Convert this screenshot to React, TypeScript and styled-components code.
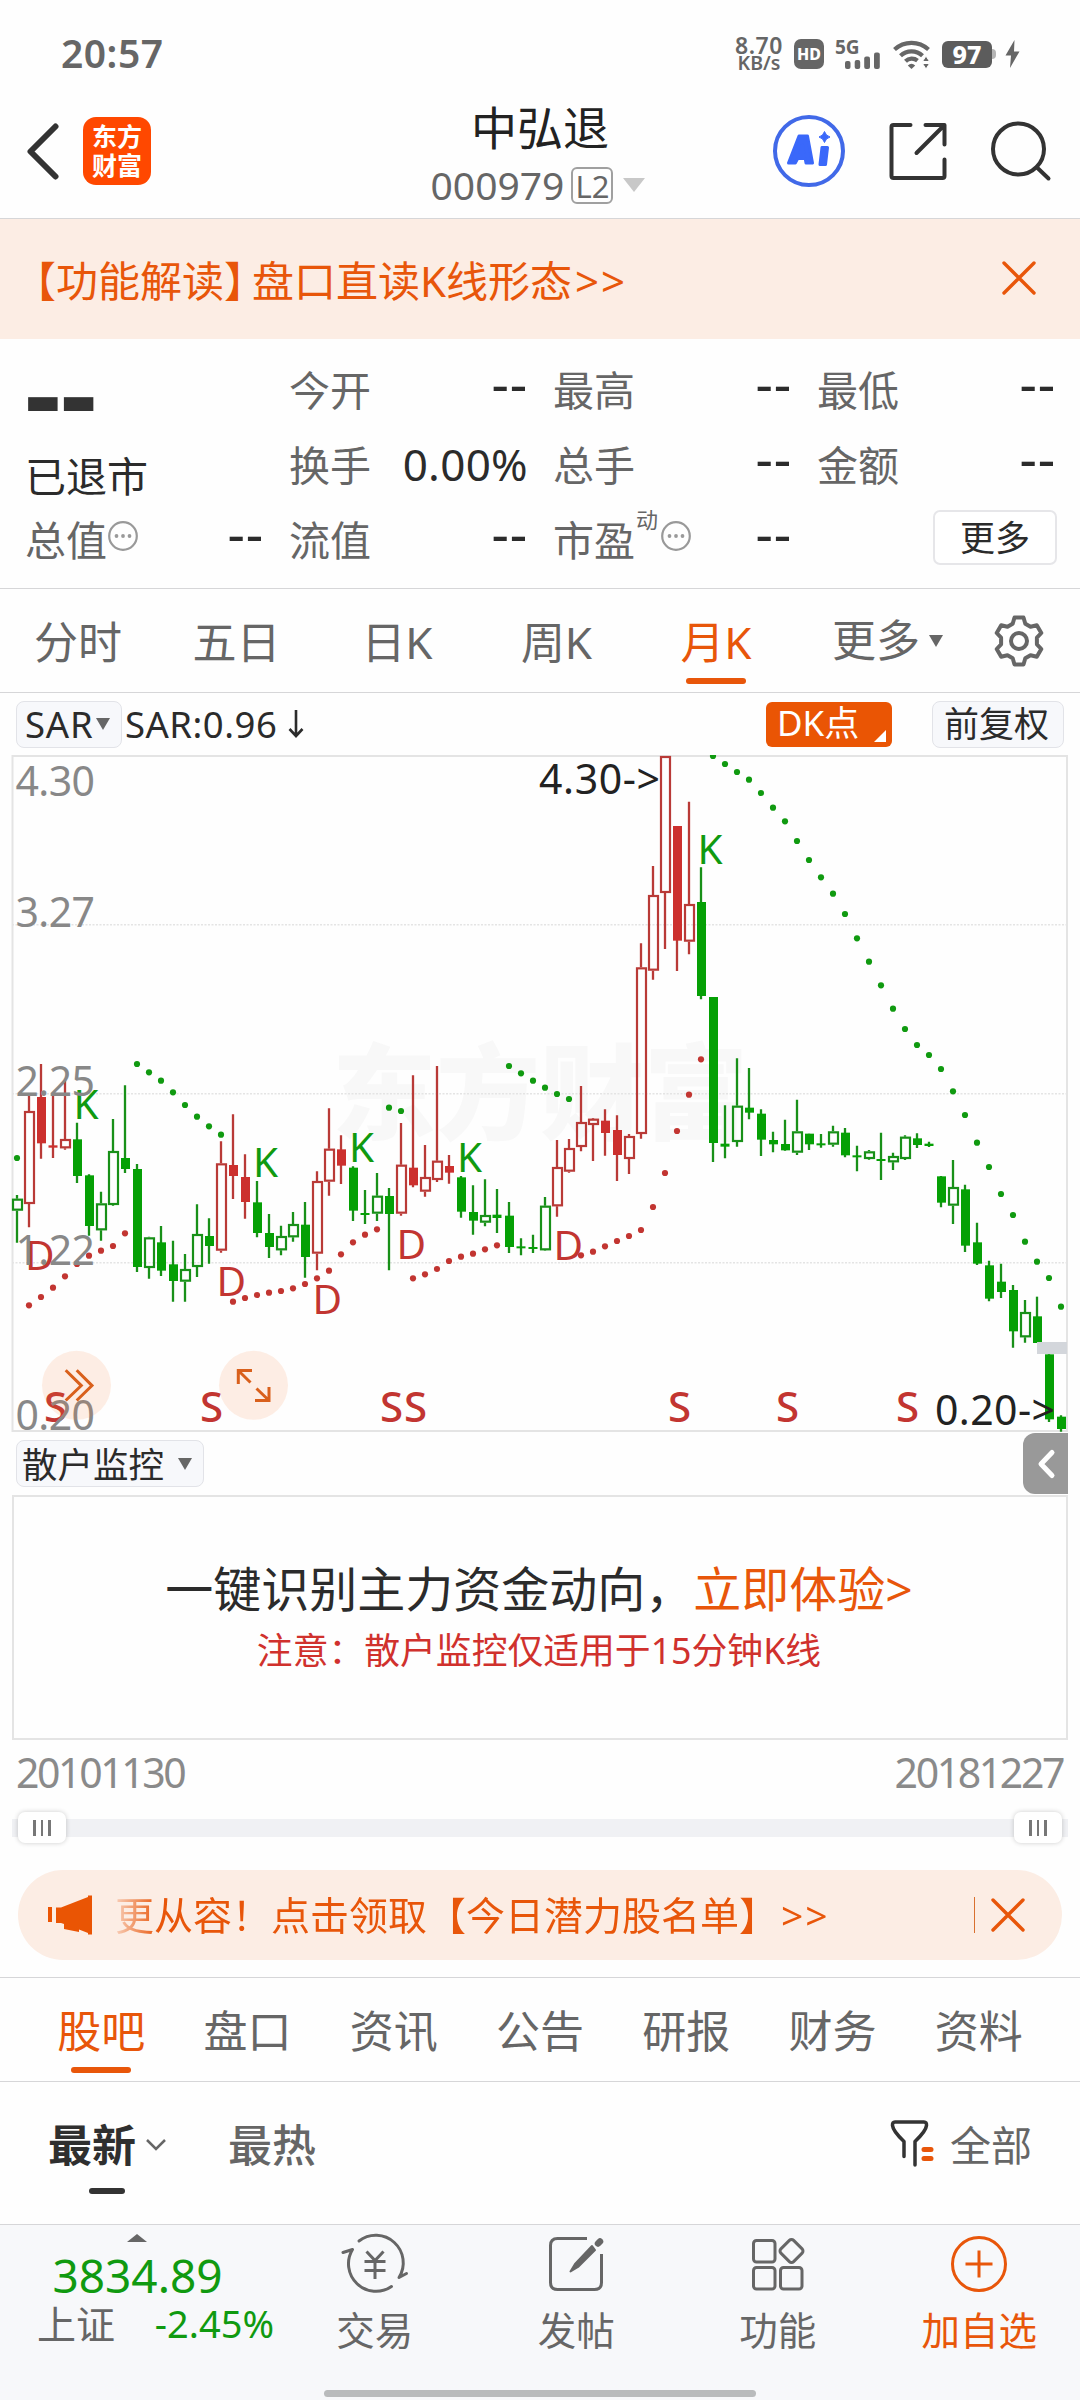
import React from "react";
import styled, { createGlobalStyle, css } from "styled-components";

const accent = "#e8560a";
const green = "#109a10";
const solidGreen = "#05a005";
const red = "#c23531";
const ink = "#2b2b2b";
const grey = "#666";
const line = "#d6d6d8";

const GlobalStyle = createGlobalStyle`
  * { box-sizing: border-box; }
  body {
    margin: 0;
    background: #fefefe;
    font-family: "Noto Sans", "Noto Sans CJK SC", sans-serif;
    color: ${ink};
  }
  svg { display: block; flex: none; }
`;

const Screen = styled.div`
  width: 1080px;
  height: 2400px;
  display: flex;
  flex-direction: column;
  overflow: hidden;
  background: #fefefe;
  white-space: nowrap;
`;

/* ---------- status bar ---------- */
const StatusBar = styled.div`
  height: 96px;
  padding: 12px 60px 0 61px;
  display: flex;
  align-items: center;
  justify-content: space-between;
  color: ${grey};
`;
const Clock = styled.span`
  margin-top: -3px;
  font-size: 39px;
  font-weight: 600;
  letter-spacing: 0.5px;
`;
const StatusIcons = styled.div`
  display: flex;
  align-items: center;
`;
const NetSpeed = styled.div`
  display: flex;
  flex-direction: column;
  align-items: center;
  width: 52px;
  margin-right: 9px;
  font-weight: 600;
  line-height: 18px;
  font-size: 19.5px;
`;
const SpeedValue = styled.span`
  font-size: 23px;
  letter-spacing: 0.5px;
`;
const HdBadge = styled.span`
  width: 30px;
  height: 30px;
  margin-right: 12px;
  border-radius: 7px;
  background: ${grey};
  color: #fff;
  font-size: 16px;
  font-weight: 800;
  line-height: 30px;
  text-align: center;
`;
const Battery = styled.span`
  width: 50px;
  height: 27px;
  margin-left: 11px;
  border-radius: 6px;
  background: #5c5c5c;
  color: #fff;
  font-size: 25px;
  font-weight: 800;
  line-height: 27px;
  text-align: center;
`;
const BatteryTip = styled.span`
  width: 4px;
  height: 10px;
  margin-right: 9px;
  border-radius: 0 4px 4px 0;
  background: #b5b5b5;
`;

/* ---------- header ---------- */
const Header = styled.header`
  height: 123px;
  display: grid;
  grid-template-columns: 1fr auto 1fr;
  border-bottom: 1px solid ${line};
`;
const HeaderSide = styled.div<{ $end?: boolean }>`
  height: 68px;
  margin-top: 21px;
  padding: ${(p) => (p.$end ? "0 28px 0 0" : "0 0 0 26px")};
  display: flex;
  align-items: center;
  gap: ${(p) => (p.$end ? 42 : 23)}px;
  justify-content: ${(p) => (p.$end ? "flex-end" : "flex-start")};
`;
const BrandLogo = styled.div`
  width: 68px;
  height: 68px;
  padding: 5px 0;
  display: flex;
  flex-direction: column;
  align-items: center;
  border-radius: 13px;
  background: #ff4800;
  color: #fff;
  font-size: 25px;
  font-weight: 700;
  line-height: 29px;
`;
const TitleBlock = styled.div`
  padding-top: 6px;
  display: flex;
  flex-direction: column;
  align-items: center;
`;
const Title = styled.h1`
  margin: 0;
  font-size: 46px;
  font-weight: 400;
  line-height: 50px;
  color: #222;
`;
const CodeRow = styled.div`
  margin: 13px 0 0 -4px;
  height: 40px;
  display: flex;
  align-items: center;
  font-size: 39px;
  line-height: 40px;
  color: ${grey};
`;
const LevelTag = styled.span`
  width: 42px;
  height: 37px;
  margin: 0 10px 0 7px;
  border: 2px solid #a0a0a0;
  border-radius: 6px;
  font-size: 31px;
  line-height: 34px;
  text-align: center;
`;
const Triangle = styled.i<{ $w: number; $h: number; $c?: string; $up?: boolean }>`
  flex: none;
  width: 0;
  height: 0;
  border: solid transparent;
  border-width: 0 ${(p) => p.$w / 2}px;
  ${(p) =>
    p.$up
      ? css`border-bottom: ${p.$h}px solid ${p.$c || grey};`
      : css`border-top: ${p.$h}px solid ${p.$c || grey};`}
`;

/* ---------- top notice ---------- */
const Notice = styled.div`
  height: 120px;
  padding: 0 44px 2px 14px;
  display: flex;
  align-items: center;
  justify-content: space-between;
  background: #fcede4;
  color: ${accent};
  font-size: 42px;
`;
const CloseBracket = styled.span`
  margin-right: -14px;
`;
const Arrows = styled.span`
  margin-left: 3px;
  letter-spacing: 2px;
`;

/* ---------- quote panel ---------- */
const Quote = styled.section`
  height: 250px;
  padding: 11px 26px 0 25px;
  display: grid;
  grid-template-columns: repeat(4, 237px);
  column-gap: 27px;
  border-bottom: 1px solid ${line};
  font-size: 41px;
`;
const QuoteColumn = styled.div`
  display: flex;
  flex-direction: column;
`;
const QuoteRow = styled.div`
  height: 75px;
  display: flex;
  align-items: center;
  color: ${grey};
`;
const QuoteValue = styled.span`
  margin: 2px -2px 0 auto;
  color: ${ink};
  font-size: 44px;
  letter-spacing: 0.3px;
`;
const Dashes = styled.span`
  margin: -9px -2px 0 auto;
  color: ${ink};
  font-size: 54px;
  line-height: 60px;
  letter-spacing: 0.8px;
`;
const LastPrice = styled.div`
  height: 84px;
  color: #333;
  font-size: 112px;
  font-weight: 700;
  line-height: 82px;
`;
const ListingState = styled.div`
  height: 66px;
  color: ${ink};
  line-height: 84px;
`;
const Superscript = styled.sup`
  margin: -37px 2px 0 1px;
  font-size: 22px;
  line-height: 24px;
`;
const InfoDot = styled.svg`
  width: 32px;
  height: 32px;
  margin-top: -3px;
`;
const MoreButton = styled.button`
  width: 124px;
  height: 55px;
  margin: 0 -3px 0 auto;
  padding: 0;
  border: 2px solid #e6e6e9;
  border-radius: 7px;
  background: #fff;
  color: ${ink};
  font: 35px/48px "Noto Sans", "Noto Sans CJK SC", sans-serif;
`;

/* ---------- tabs ---------- */
const PeriodTabs = styled.nav`
  height: 104px;
  display: flex;
  border-bottom: 1px solid ${line};
`;
const Tab = styled.div<{ $w: number; $active?: boolean }>`
  width: ${(p) => p.$w}px;
  display: flex;
  flex-direction: column;
  align-items: center;
  color: ${(p) => (p.$active ? accent : grey)};
  font-size: 44px;
  line-height: 107px;
  &::after {
    content: "";
    display: ${(p) => (p.$active ? "block" : "none")};
    width: 60px;
    height: 6px;
    margin-top: -18px;
    border-radius: 3px;
    background: ${accent};
  }
`;
const TabMore = styled.div`
  width: 164px;
  padding-left: 36px;
  display: flex;
  align-items: center;
  gap: 9px;
  color: ${grey};
  font-size: 44px;
  line-height: 107px;
`;
const TabIcon = styled.div`
  width: 118px;
  display: flex;
  align-items: center;
  justify-content: center;
`;
const SectionTabs = styled.nav`
  height: 105px;
  padding: 0 28px;
  display: flex;
  border-top: 1px solid ${line};
  border-bottom: 1px solid ${line};
`;

/* ---------- chart ---------- */
const ChartTools = styled.div`
  height: 62px;
  padding: 0 16px;
  display: flex;
  align-items: center;
  font-size: 36.5px;
`;
const Chip = styled.div<{ $w: number; $pad: number; $gap?: number }>`
  width: ${(p) => p.$w}px;
  height: 47px;
  padding-left: ${(p) => p.$pad}px;
  display: flex;
  align-items: center;
  gap: ${(p) => p.$gap || 0}px;
  border: 1.5px solid #e2e3e8;
  border-radius: 8px;
  background: #f7f8fb;
  color: ${ink};
  line-height: 44px;
`;
const AdjustLabel = styled.span`
  font-size: 35px;
`;
const SarValue = styled.span`
  margin-left: 3px;
  letter-spacing: 0.5px;
`;
const SarLabel = styled.span`
  letter-spacing: 0.8px;
`;
const DkButton = styled.div`
  width: 126px;
  height: 45px;
  margin-left: auto;
  margin-right: 40px;
  padding: 0 6px 5px 11px;
  display: flex;
  align-items: flex-end;
  justify-content: space-between;
  border-radius: 6px;
  background: #ea5504;
  color: #fff;
  font-size: 35px;
  line-height: 38px;
`;
const SubBar = styled.div`
  height: 63px;
  padding: 0 12px 0 16px;
  display: flex;
  align-items: center;
  justify-content: space-between;
  font-size: 35.5px;
`;
const CollapseButton = styled.div`
  width: 45px;
  height: 61px;
  display: flex;
  align-items: center;
  justify-content: center;
  border-radius: 12px 0 0 12px;
  background: #999;
`;
const Promo = styled.div`
  height: 245px;
  margin: 0 12px;
  padding: 62px 2px 0 0;
  display: flex;
  flex-direction: column;
  align-items: center;
  border: 2px solid #e4e4e4;
`;
const PromoTitle = styled.div`
  font-size: 48px;
  line-height: 60px;
`;
const PromoLink = styled.span`
  color: ${accent};
`;
const PromoNote = styled.div`
  color: #d0312d;
  font-size: 35.8px;
  line-height: 62px;
`;
const DateRow = styled.div`
  height: 65px;
  padding: 0 17px 2px 16px;
  display: flex;
  align-items: center;
  justify-content: space-between;
  color: #8a8a8a;
  font-size: 41px;
  letter-spacing: -2.4px;
`;
const SliderBox = styled.div`
  height: 64px;
  margin: 0 12px;
  padding: 0 6px;
  display: flex;
  align-items: center;
  justify-content: space-between;
  background: linear-gradient(#f0f1f4, #f0f1f4) center 14px / 100% 18px no-repeat;
`;
const Handle = styled.div`
  width: 48px;
  height: 31px;
  margin-top: -19px;
  display: flex;
  align-items: center;
  justify-content: center;
  gap: 5px;
  border-radius: 7px;
  background: #fff;
  box-shadow: 0 0 5px rgba(0, 0, 0, 0.2);
`;
const Grip = styled.i`
  width: 2.5px;
  height: 16px;
  background: #777;
`;

/* ---------- promo pill ---------- */
const Pill = styled.div`
  height: 90px;
  margin: 1px 18px 17px;
  padding: 0 37px 0 29px;
  display: flex;
  align-items: center;
  border-radius: 45px;
  background: #fcede4;
  color: ${accent};
  font-size: 39px;
`;
const PillText = styled.div`
  flex: 1;
  margin-left: 22px;
  line-height: 88px;
  mask-image: linear-gradient(90deg, rgba(0, 0, 0, 0.2), #000 44px);
`;
const PillDivider = styled.i`
  width: 1.5px;
  height: 36px;
  margin-right: 16px;
  background: #d9702f;
`;

/* ---------- post filter ---------- */
const FilterRow = styled.div`
  height: 142px;
  padding: 0 48px;
  display: flex;
`;
const SortOption = styled.div<{ $active?: boolean }>`
  margin-right: 62px;
  display: flex;
  flex-direction: column;
  align-items: center;
  color: ${(p) => (p.$active ? "#2f2f2f" : grey)};
  font-size: 44px;
  font-weight: ${(p) => (p.$active ? 700 : 500)};
  &::after {
    content: "";
    display: ${(p) => (p.$active ? "block" : "none")};
    width: 36px;
    height: 6px;
    margin-top: -20px;
    border-radius: 3px;
    background: #333;
  }
`;
const SortLabel = styled.div`
  display: flex;
  align-items: center;
  gap: 10px;
  line-height: 126px;
`;
const FilterButton = styled.div`
  margin-left: auto;
  height: 122px;
  display: flex;
  align-items: center;
  gap: 14px;
  color: ${grey};
  font-size: 41px;
`;

/* ---------- bottom bar ---------- */
const BottomBar = styled.footer`
  flex: 1;
  display: flex;
  flex-direction: column;
  border-top: 1px solid ${line};
  background: #f7f8fa;
`;
const BottomItems = styled.div`
  height: 165px;
  display: flex;
`;
const IndexQuote = styled.div`
  width: 274px;
  padding-top: 9px;
  display: flex;
  flex-direction: column;
  align-items: center;
`;
const IndexPrice = styled.div`
  margin: 3px 0 0 1px;
  color: ${green};
  font-size: 46px;
  line-height: 60px;
`;
const IndexRow = styled.div`
  width: 100%;
  padding-left: 37px;
  display: flex;
  justify-content: space-between;
  color: ${grey};
  font-size: 39px;
  line-height: 37px;
`;
const IndexChange = styled.span`
  color: ${green};
  font-size: 38px;
`;
const NavItem = styled.div<{ $accent?: boolean }>`
  width: 201.5px;
  padding-top: 8px;
  display: flex;
  flex-direction: column;
  align-items: center;
  color: ${(p) => (p.$accent ? accent : grey)};
  font-size: 38.5px;
  line-height: 71px;
`;
const HomeIndicator = styled.div`
  width: 432px;
  height: 7px;
  margin: 0 auto;
  border-radius: 4px;
  background: #b9bbbc;
`;

/* ---------- icons ---------- */
const CloseIcon = () => (
  <svg width="34" height="34" viewBox="0 0 34 34" stroke={accent} strokeWidth="3.4" strokeLinecap="round">
    <path d="M2 2 32 32M32 2 2 32" />
  </svg>
);

const InfoIcon = () => (
  <InfoDot viewBox="0 0 32 32">
    <circle cx="16" cy="16" r="13.8" fill="none" stroke="#999" strokeWidth="2.2" />
    {[9.5, 16, 22.5].map((x) => (
      <circle key={x} cx={x} cy="16" r="1.9" fill="#999" />
    ))}
  </InfoDot>
);

const SignalIcon = () => (
  <svg width="46" height="32" viewBox="0 0 46 32" fill={grey} overflow="visible">
    <text x="-1" y="15.5" fontSize="19" fontWeight="700" fontFamily="Noto Sans">5G</text>
    <rect x="9" y="23" width="5.5" height="8" rx="2" />
    <rect x="18.7" y="22" width="5.5" height="9" rx="2" />
    <rect x="28.2" y="18.5" width="5.8" height="12.5" rx="2" />
    <rect x="38" y="14.5" width="5.8" height="16.5" rx="2" />
  </svg>
);

const WifiIcon = () => (
  <svg width="38" height="32" viewBox="0 0 38 32" fill="none" stroke={grey} strokeWidth="4.2">
    <path d="M1.5 11.5a25 25 0 0 1 34 0" />
    <path d="M7.5 17.8a16 16 0 0 1 22 0" />
    <path d="M12.5 23.2a9 9 0 0 1 12 -.6" />
    <path d="M14.8 27.5q3.7-3.6 7.4 0L18.5 31z" fill={grey} stroke="none" />
    <path d="M29.5 23.5 33 18l3.5 5.5zM29.5 25.5 33 31l3.5-5.5z" fill={grey} stroke="#fefefe" strokeWidth="1" />
  </svg>
);

const StatusGap = styled.i`
  width: 11px;
`;

const BoltIcon = () => (
  <svg width="15" height="28" viewBox="0 0 15 28" fill={grey}>
    <path d="M9.5 0 .5 15.5H6L5 28 14.5 11.5H9z" />
  </svg>
);

const BackIcon = () => (
  <svg width="34" height="58" viewBox="0 0 34 58" fill="none" stroke="#333" strokeWidth="6" strokeLinecap="round" strokeLinejoin="round">
    <path d="M29.5 4.500 4.500 29.500 29.500 54.500" />
  </svg>
);

const AiIcon = () => (
  <svg width="74" height="74" viewBox="0 0 74 74">
    <circle cx="37" cy="37" r="34" fill="#fff" stroke="#4169e8" strokeWidth="4" />
    <path
      fillRule="evenodd"
      fill="#3a68fa"
      stroke="#3a68fa"
      strokeWidth="3"
      strokeLinejoin="round"
      d="M27 22h8.500l5 27h-6.500l-.8-4.500h-7.500L23.300 49H16.500zM30.500 31l-2.700 7.500h4z"
    />
    <path d="M50 33.500h5.500L53.500 50.500H48z" fill="#3a68fa" stroke="#3a68fa" strokeWidth="3" strokeLinejoin="round" />
    <path d="M52.500 17.500q1.200 4.300 5.500 5.500-4.300 1.200-5.500 5.500-1.200-4.300-5.500-5.500 4.300-1.200 5.500-5.500z" fill="#3a68fa" stroke="#3a68fa" />
  </svg>
);

const ShareIcon = () => (
  <svg width="60" height="60" viewBox="0 0 60 60" fill="none" stroke="#333" strokeWidth="4" strokeLinecap="round" strokeLinejoin="round">
    <path d="M22.500 4H5.500q-2 0-2 2v49q0 2 2 2h49q2 0 2-2V38.500" />
    <path d="M37.500 4H56.500V23.500M55 5.500 28.500 32" />
  </svg>
);

const SearchIcon = () => (
  <svg width="62" height="62" viewBox="0 0 62 62" fill="none" stroke="#333" strokeWidth="4" strokeLinecap="round">
    <circle cx="28.500" cy="29" r="25.500" />
    <path d="M47 47.500 58.500 58.500" />
  </svg>
);

const GearIcon = () => (
  <svg width="54" height="54" viewBox="0 0 54 54" fill="none" stroke={grey} strokeWidth="4" strokeLinejoin="round">
    <path d="M22.500 3.500h9l1.800 6.200 5.200 3 6.300-1.500 4.500 7.800-4.400 4.700v6.600l4.400 4.700-4.500 7.800-6.300-1.500-5.200 3-1.800 6.200h-9l-1.800-6.200-5.200-3-6.300 1.500-4.500-7.800 4.400-4.700v-6.600L4.700 19l4.500-7.800 6.300 1.500 5.200-3z" />
    <circle cx="27" cy="27" r="8" />
  </svg>
);

const HornIcon = () => (
  <svg width="46" height="42" viewBox="0 0 46 42" fill="#ea5504">
    <rect x="1" y="13" width="4" height="15" />
    <path d="M9 13.500h5L41 3V1.500h4v39h-4V39L32 35.500V38l-15-3v-5l-3-1H9z" />
  </svg>
);

const FunnelIcon = () => (
  <svg width="46" height="48" viewBox="0 0 46 48" fill="none" strokeWidth="3.500" strokeLinecap="round" strokeLinejoin="round">
    <path d="M14 37.500V22.500Q3 12 2.500 6.500q-.3-3.500 2.500-3.500h29q2.800 0 2.500 3.500Q36 12 25 22.500V46" stroke="#333" />
    <path d="M34 30.500h7M34 39.500h7" stroke={accent} strokeWidth="5" />
  </svg>
);

const TradeIcon = () => (
  <svg width="68" height="62" viewBox="0 0 68 62" fill="none" stroke={grey} strokeWidth="3" strokeLinecap="round">
    <path d="M18 8A27.500 27.500 0 0 1 58 44.500L65.500 40.500" strokeLinejoin="round" />
    <path d="M50.500 53.500A27.500 27.500 0 0 1 11.500 16.500L2 19.500" strokeLinejoin="round" />
    <path d="M25.500 18.500 34 27.500 42.500 18.500M34 27.500V46M23.500 28.500h21M23.500 37.500h21" strokeLinecap="butt" />
  </svg>
);

const PostIcon = () => (
  <svg width="62" height="62" viewBox="0 0 62 62" fill="none" stroke={grey} strokeWidth="3">
    <path d="M42 5.500H12.500q-7 0-7 7v37q0 7 7 7h37q7 0 7-7V21" />
    <path d="M47 13 30 31 25.500 38.500 33 34 50 17z" fill={grey} strokeWidth="2" strokeLinejoin="round" />
    <path d="M53 10.500 55 8.500" strokeWidth="6.500" strokeLinecap="round" />
  </svg>
);

const GridIcon = () => (
  <svg width="62" height="62" viewBox="0 0 62 62" fill="none" stroke={grey} strokeWidth="3">
    <rect x="6.500" y="7.500" width="21.500" height="21.500" rx="3" />
    <rect x="6.500" y="34.500" width="21.500" height="21.500" rx="3" />
    <rect x="33.500" y="34.500" width="21.500" height="21.500" rx="3" />
    <rect x="35.500" y="9" width="18" height="18" rx="3" transform="rotate(45 44.500 18)" />
  </svg>
);

const AddIcon = () => (
  <svg width="62" height="62" viewBox="0 0 62 62" fill="none" stroke={accent} strokeWidth="3">
    <circle cx="31" cy="31" r="26.500" />
    <path d="M17.500 31h27M31 17.500v27" />
  </svg>
);

/* ---------- candle data: kind, high, top, bottom, low ---------- */
type Candle = [string, number, number, number, number];
type Block = { base: number; rows: Candle[] };

/* Values are thirds of a pixel below each block's base line.
   G / R: filled body, g / r: hollow body, x: green cross, y: red cross. */
const blocks: Block[] = [
  {
    base: 1040,
    rows: [
      ["g", 465, 476, 512, 608], ["r", 165, 213, 492, 562], ["R", 72, 171, 310, 356], ["y", 168, 316, 323, 354],
      ["r", 120, 297, 325, 329], ["G", 248, 298, 408, 429], ["G", 403, 406, 558, 587], ["g", 455, 490, 571, 602],
      ["g", 237, 333, 495, 497], ["G", 136, 354, 387, 399], ["G", 372, 387, 681, 696], ["g", 590, 592, 684, 716],
      ["G", 558, 607, 692, 708], ["G", 602, 673, 723, 785], ["g", 642, 687, 725, 785], ["g", 493, 582, 681, 711],
      ["G", 535, 588, 618, 671], ["r", 304, 370, 632, 638], ["R", 223, 375, 408, 477], ["R", 343, 411, 486, 536],
      ["G", 423, 487, 579, 592], ["G", 522, 579, 621, 654], ["g", 557, 588, 631, 646], ["g", 516, 552, 592, 605],
      ["G", 486, 554, 651, 713], ["r", 394, 423, 641, 691], ["r", 205, 326, 425, 467], ["R", 286, 328, 377, 432],
      ["G", 379, 383, 512, 543],
    ],
  },
  {
    base: 1000,
    rows: [
      ["x", 570, 639, 645, 672], ["g", 519, 587, 641, 663], ["G", 564, 588, 642, 811], ["r", 369, 494, 641, 647],
      ["R", 226, 503, 556, 562], ["r", 435, 531, 575, 590], ["r", 198, 482, 540, 546], ["R", 465, 498, 518, 551],
      ["G", 528, 532, 635, 653], ["G", 556, 636, 662, 704], ["g", 538, 645, 668, 679], ["x", 567, 644, 654, 699],
      ["G", 606, 647, 741, 759], ["x", 715, 739, 745, 766], ["x", 704, 741, 747, 759], ["g", 591, 617, 751, 752],
      ["r", 420, 501, 619, 650], ["r", 417, 444, 515, 518], ["r", 258, 366, 441, 454], ["r", 354, 356, 375, 483],
      ["R", 328, 362, 399, 467], ["R", 346, 390, 465, 543], ["r", 402, 408, 477, 522],
    ],
  },
  {
    base: 740,
    rows: [
      ["r", 610, 682, 1182, 1196], ["r", 378, 465, 692, 719], ["r", 48, 48, 459, 627], ["R", 258, 258, 602, 693],
      ["r", 185, 492, 605, 643], ["G", 382, 486, 768, 778], ["G", 771, 771, 1209, 1266], ["x", 1096, 1211, 1220, 1255],
      ["g", 955, 1097, 1206, 1220], ["G", 984, 1103, 1118, 1138], ["G", 1108, 1121, 1199, 1248], ["G", 1175, 1200, 1213, 1237],
      ["G", 1139, 1212, 1231, 1232], ["g", 1079, 1174, 1238, 1245], ["G", 1181, 1181, 1213, 1230], ["x", 1182, 1210, 1213, 1223],
      ["g", 1157, 1174, 1214, 1220], ["G", 1164, 1178, 1246, 1252], ["x", 1217, 1246, 1252, 1294], ["g", 1230, 1234, 1257, 1259],
      ["x", 1178, 1257, 1263, 1320], ["g", 1238, 1248, 1267, 1290],
    ],
  },
  {
    base: 1080,
    rows: [
      ["g", 166, 170, 237, 240], ["G", 160, 175, 195, 204], ["x", 185, 191, 198, 201], ["G", 288, 289, 368, 382],
      ["g", 240, 321, 377, 432], ["G", 314, 328, 497, 516], ["G", 428, 487, 551, 555], ["G", 542, 556, 656, 664],
      ["G", 551, 605, 636, 654], ["G", 615, 630, 754, 803], ["g", 660, 696, 772, 788], ["G", 650, 709, 789, 789],
      ["G", 823, 823, 1018, 1026], ["G", 1006, 1010, 1047, 1055],
    ],
  },
];

const candles = blocks.flatMap((b) =>
  b.rows.map(([kind, ...v]) => ({ kind, v: v.map((n) => b.base + n / 3) }))
);

/* SAR runs: colour, index of the first candle, y of each dot */
const third = (base: number, ys: number[]) => ys.map((y) => base + y / 3);
const sarRuns: [string, number, number[]][] = [
  [green, 0, third(1040, [354])],
  [red, 1, third(1040, [796, 771, 743, 709, 672, 647, 632, 618, 580])],
  [green, 10, third(1040, [72, 97, 122, 157, 195, 230, 259, 284])],
  [red, 18, third(1040, [785, 774, 765, 758, 753, 745, 732, 715, 692, 643, 607])],
  [red, 29, third(1000, [704, 688])],
  [green, 31, third(1000, [323, 333])],
  [red, 33, third(1000, [835, 823, 807, 783, 770, 761, 748, 736])],
  [green, 41, third(1000, [198, 220, 242, 263, 282, 297])],
  [red, 47, third(1000, [766, 755, 739, 723, 708, 690, 621, 519, 393, 284, 178])],
  [green, 58, third(740, [48, 72, 96, 119, 159, 203, 244, 303, 360, 412, 461, 522, 595, 665, 736, 806])],
  [green, 74, [1029, 1045, 1055, 1069]],
  [green, 78, third(1080, [34, 105, 188, 261, 342, 405, 485, 545, 594, 680])],
];

const kMarks = [[73.500, 1119], [253, 1177], [349, 1162.300], [457, 1172], [697.500, 864.300]];
const dMarks = [[25, 1270], [216.500, 1295.500], [312.500, 1313.500], [396.500, 1258.500], [553.500, 1259.500]];
const sMarks = [44, 200, 380, 404, 668, 776, 896];
const axis: [string, number][] = [["4.30", 796], ["3.27", 927], ["2.25", 1095.500], ["1.22", 1264.500], ["0.20", 1429.500]];

const CandleMark = ({ i, kind, v }: { i: number; kind: string; v: number[] }) => {
  const c = 17 + i * 12;
  const [high, top, bottom, low] = v;
  const isRed = "Rry".includes(kind);
  const color = isRed ? "#b93a37" : "#189018";
  const hollow = kind === "g" || kind === "r";
  const cross = kind === "x" || kind === "y";
  return (
    <g>
      <path d={`M${c} ${high}V${hollow ? top : bottom}M${c} ${bottom}V${low}`} stroke={color} strokeWidth="2.300" />
      {hollow ? (
        <rect x={c - 4} y={top + 1} width="9" height={bottom - top - 2} fill="none" stroke={color} strokeWidth="2.200" />
      ) : (
        <rect
          x={cross ? c - 4.500 : c - 4}
          y={top}
          width="9"
          height={Math.max(bottom - top, 2)}
          fill={isRed ? "#cc302e" : solidGreen}
        />
      )}
    </g>
  );
};

const CandleChart = () => (
  <svg width="1080" height="677" viewBox="0 755 1080 677" fontFamily="'Noto Sans', 'Noto Sans CJK SC', sans-serif" fontSize="41">
    <text x="332" y="1132" fontSize="104" fontWeight="900" fill="#f8f8f8">东方财富</text>
    <g stroke="#e4e4e4" strokeWidth="1.500" strokeDasharray="2 1.500">
      <path d="M12 924.700H1067M12 1093.700H1067M12 1262.700H1067" />
    </g>
    <rect x="12.500" y="756" width="1054.500" height="675" fill="none" stroke="#e4e4e4" strokeWidth="2" />
    {candles.map((c, i) => (
      <CandleMark key={i} i={i} {...c} />
    ))}
    <rect x="1037" y="1342" width="30" height="12" fill="#d3d6db" />
    {sarRuns.map(([color, start, ys]) =>
      ys.map((y, n) => <circle key={start + n} cx={17 + (start + n) * 12} cy={y} r="3.100" fill={color} />)
    )}
    <g fontSize="40.500">
      {kMarks.map(([x, y]) => (
        <text key={x} x={x} y={y} fill={green}>K</text>
      ))}
      {dMarks.map(([x, y]) => (
        <text key={x} x={x} y={y} fill={red}>D</text>
      ))}
      {sMarks.map((x) => (
        <text key={x} x={x} y="1421.500" fill={red} fontSize="42" fontWeight="500">S</text>
      ))}
    </g>
    <g fill="#888">
      {axis.map(([label, y]) => (
        <text key={label} x="15.500" y={y} letterSpacing="-0.600">{label}</text>
      ))}
    </g>
    <g fill="#222">
      <text x="539" y="794" letterSpacing="0.600">4.30-&gt;</text>
      <text x="935" y="1424.500" letterSpacing="0.400">0.20-&gt;</text>
    </g>
    <g fill="#fb7a35" fillOpacity="0.13">
      <circle cx="76.500" cy="1385.300" r="34.500" />
      <circle cx="253.500" cy="1385.300" r="34.500" />
    </g>
    <g fill="none" stroke="#d9601c" strokeWidth="3">
      <path d="M65.700 1370.300 81.300 1385.600 65.700 1400.500M76.700 1370.300 92 1385.600 76.700 1400.500" />
      <path d="M238.300 1384V1370.500H252M238.300 1370.500 250.500 1382.500M269 1387V1400.500H255M269 1400.500 256.500 1388.500" />
    </g>
  </svg>
);

/* ---------- page data ---------- */
const quoteColumns: [string, string][][] = [
  [["今开", "--"], ["换手", "0.00%"], ["流值", "--"]],
  [["最高", "--"], ["总手", "--"], ["市盈", "--"]],
  [["最低", "--"], ["金额", "--"]],
];
const periods: [string, number][] = [["分时", 156], ["五日", 161], ["日K", 160], ["周K", 159], ["月K", 160]];
const sections = ["股吧", "盘口", "资讯", "公告", "研报", "财务", "资料"];
const navItems: [string, React.FC][] = [
  ["交易", TradeIcon],
  ["发帖", PostIcon],
  ["功能", GridIcon],
  ["加自选", AddIcon],
];

const SliderHandle = () => (
  <Handle>
    <Grip />
    <Grip />
    <Grip />
  </Handle>
);

export default function App() {
  return (
    <Screen>
      <GlobalStyle />
      <StatusBar>
        <Clock>20:57</Clock>
        <StatusIcons>
          <NetSpeed>
            <SpeedValue>8.70</SpeedValue>
            KB/s
          </NetSpeed>
          <HdBadge>HD</HdBadge>
          <SignalIcon />
          <StatusGap />
          <WifiIcon />
          <Battery>97</Battery>
          <BatteryTip />
          <BoltIcon />
        </StatusIcons>
      </StatusBar>

      <Header>
        <HeaderSide>
          <BackIcon />
          <BrandLogo>
            <span>东方</span>
            <span>财富</span>
          </BrandLogo>
        </HeaderSide>
        <TitleBlock>
          <Title>中弘退</Title>
          <CodeRow>
            000979
            <LevelTag>L2</LevelTag>
            <Triangle $w={22} $h={14} $c="#c8c8c8" />
          </CodeRow>
        </TitleBlock>
        <HeaderSide $end>
          <AiIcon />
          <ShareIcon />
          <SearchIcon />
        </HeaderSide>
      </Header>

      <Notice>
        <span>
          【功能解读<CloseBracket>】</CloseBracket>盘口直读K线形态<Arrows>&gt;&gt;</Arrows>
        </span>
        <CloseIcon />
      </Notice>

      <Quote>
        <QuoteColumn>
          <LastPrice>--</LastPrice>
          <ListingState>已退市</ListingState>
          <QuoteRow>
            总值
            <InfoIcon />
            <Dashes>--</Dashes>
          </QuoteRow>
        </QuoteColumn>
        {quoteColumns.map((rows, c) => (
          <QuoteColumn key={c}>
            {rows.map(([label, value]) => (
              <QuoteRow key={label}>
                {label}
                {label === "市盈" && (
                  <>
                    <Superscript>动</Superscript>
                    <InfoIcon />
                  </>
                )}
                {value === "--" ? <Dashes>--</Dashes> : <QuoteValue>{value}</QuoteValue>}
              </QuoteRow>
            ))}
            {c === 2 && (
              <QuoteRow>
                <MoreButton>更多</MoreButton>
              </QuoteRow>
            )}
          </QuoteColumn>
        ))}
      </Quote>

      <PeriodTabs>
        {periods.map(([p, w]) => (
          <Tab key={p} $w={w} $active={p === "月K"}>
            {p}
          </Tab>
        ))}
        <TabMore>
          更多
          <Triangle $w={15} $h={12} />
        </TabMore>
        <TabIcon>
          <GearIcon />
        </TabIcon>
      </PeriodTabs>

      <ChartTools>
        <Chip $w={106} $pad={8} $gap={3}>
          <SarLabel>SAR</SarLabel>
          <Triangle $w={15} $h={12} />
        </Chip>
        <SarValue>SAR:0.96</SarValue>
        <svg width="30" height="30" viewBox="0 0 30 30" fill="none" stroke={ink} strokeWidth="2.600">
          <path d="M19 1V27M12.500 20 19 27 25.500 20" />
        </svg>
        <DkButton>
          DK点
          <svg width="12" height="12" viewBox="0 0 12 12">
            <path d="M12 0V12H0z" fill="#fff" />
          </svg>
        </DkButton>
        <Chip $w={132} $pad={11}>
          <AdjustLabel>前复权</AdjustLabel>
        </Chip>
      </ChartTools>
      <CandleChart />
      <SubBar>
        <Chip $w={188} $pad={5} $gap={14}>
          散户监控
          <Triangle $w={14} $h={12} />
        </Chip>
        <CollapseButton>
          <svg width="20" height="34" viewBox="0 0 20 34" fill="none" stroke="#fff" strokeWidth="5" strokeLinecap="round" strokeLinejoin="round">
            <path d="M16 5.500 5 17 16 28.500" />
          </svg>
        </CollapseButton>
      </SubBar>
      <Promo>
        <PromoTitle>
          一键识别主力资金动向，<PromoLink>立即体验&gt;</PromoLink>
        </PromoTitle>
        <PromoNote>注意：散户监控仅适用于15分钟K线</PromoNote>
      </Promo>
      <DateRow>
        <span>20101130</span>
        <span>20181227</span>
      </DateRow>
      <SliderBox>
        <SliderHandle />
        <SliderHandle />
      </SliderBox>

      <Pill>
        <HornIcon />
        <PillText>
          更从容！点击领取【今日潜力股名单】<Arrows>&gt;&gt;</Arrows>
        </PillText>
        <PillDivider />
        <CloseIcon />
      </Pill>

      <SectionTabs>
        {sections.map((s) => (
          <Tab key={s} $w={146.300} $active={s === "股吧"}>
            {s}
          </Tab>
        ))}
      </SectionTabs>

      <FilterRow>
        <SortOption $active>
          <SortLabel>
            最新
            <svg width="20" height="12" viewBox="0 0 20 12" fill="none" stroke={grey} strokeWidth="2.500">
              <path d="M1 1 10 10 19 1" />
            </svg>
          </SortLabel>
        </SortOption>
        <SortOption>
          <SortLabel>最热</SortLabel>
        </SortOption>
        <FilterButton>
          <FunnelIcon />
          全部
        </FilterButton>
      </FilterRow>

      <BottomBar>
        <BottomItems>
          <IndexQuote>
            <Triangle $w={21} $h={8} $up />
            <IndexPrice>3834.89</IndexPrice>
            <IndexRow>
              上证<IndexChange>-2.45%</IndexChange>
            </IndexRow>
          </IndexQuote>
          {navItems.map(([label, Icon]) => (
            <NavItem key={label} $accent={label === "加自选"}>
              <Icon />
              {label}
            </NavItem>
          ))}
        </BottomItems>
        <HomeIndicator />
      </BottomBar>
    </Screen>
  );
}
